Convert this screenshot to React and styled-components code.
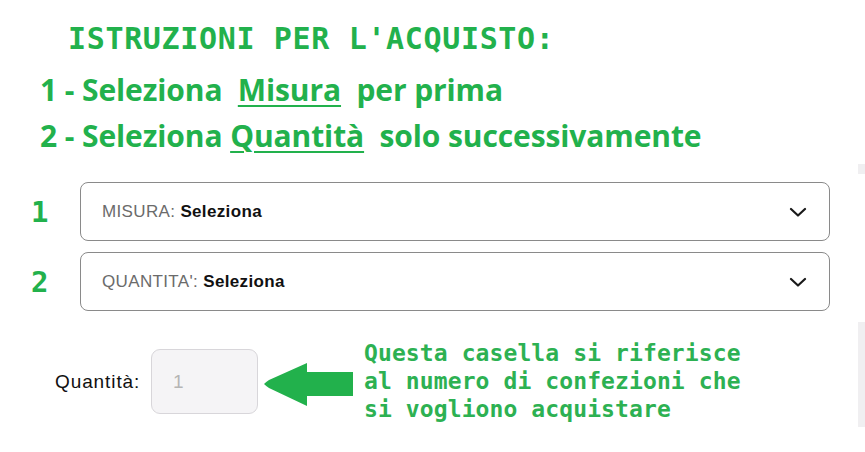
import React from "react";
import styled, { createGlobalStyle } from "styled-components";

const GREEN = "#22b14c";

const Global = createGlobalStyle`
  html, body { margin: 0; padding: 0; background: #fff; }
  body { width: 865px; height: 452px; overflow: hidden; }
`;

const Page = styled.div`
  position: relative;
  width: 865px;
  height: 452px;
  display: flex;
  flex-direction: column;
`;

const Title = styled.h1`
  margin: 21px 0 0 68px;
  font-family: "DejaVu Sans Mono", monospace;
  font-weight: bold;
  font-size: 30px;
  letter-spacing: 0.65px;
  line-height: 36px;
  color: ${GREEN};
  white-space: pre;
`;

const Step = styled.p`
  margin: ${(p) => p.$mt}px 0 0 40px;
  font-family: "Open Sans", sans-serif;
  font-weight: bold;
  font-size: 30px;
  letter-spacing: -0.1px;
  line-height: 40px;
  color: ${GREEN};
  white-space: pre;
`;

const Under = styled.span`
  text-decoration: underline;
  text-decoration-thickness: 2px;
  text-underline-offset: 4px;
`;

const Selects = styled.div`
  margin: 26px 0 0 0;
  display: flex;
  flex-direction: column;
  gap: 11px;
`;

const SelectRow = styled.div`
  display: flex;
  align-items: center;
`;

const RowNum = styled.span`
  width: 80px;
  padding-left: 31px;
  box-sizing: border-box;
  font-family: "DejaVu Sans Mono", monospace;
  font-weight: bold;
  font-size: 29px;
  color: ${GREEN};
`;

const SelectBox = styled.div`
  width: 750px;
  height: 59px;
  box-sizing: border-box;
  border: 1px solid #8a8a8a;
  border-radius: 8px;
  display: flex;
  align-items: center;
  justify-content: space-between;
  padding: 0 22px 0 21px;
  font-family: "Liberation Sans", Arial, sans-serif;
  font-size: 17px;
  letter-spacing: 0.35px;
`;

const SelLabel = styled.span`
  color: #6b6b6b;
`;

const SelValue = styled.span`
  color: #111;
  font-weight: bold;
`;

const QtyRow = styled.div`
  margin: 29px 0 0 55px;
  display: flex;
  align-items: center;
`;

const QtyLabel = styled.span`
  font-family: "Liberation Sans", Arial, sans-serif;
  font-size: 19px;
  letter-spacing: 0.9px;
  color: #111;
  width: 96px;
`;

const QtyInput = styled.div`
  width: 107px;
  height: 65px;
  box-sizing: border-box;
  border: 1px solid #d8d6da;
  border-radius: 9px;
  background: #f5f4f6;
  display: flex;
  align-items: center;
  padding-left: 21px;
  font-family: "Liberation Sans", Arial, sans-serif;
  font-size: 19px;
  color: #b5b5b5;
`;

const Arrow = styled.svg`
  margin: 6px 0 0 5px;
  flex: none;
`;

const Note = styled.p`
  margin: -1px 0 0 11px;
  font-family: "DejaVu Sans Mono", monospace;
  font-weight: bold;
  font-size: 23px;
  line-height: 28px;
  color: #2db152;
  white-space: pre;
  letter-spacing: 0.1px;
`;

const EdgeBar = styled.div`
  position: absolute;
  right: 0;
  width: 7px;
  background: #f0eff1;
  top: ${(p) => p.$top}px;
  height: ${(p) => p.$h}px;
`;

const SelectField = ({ num, label }) => (
  <SelectRow>
    <RowNum>{num}</RowNum>
    <SelectBox>
      <span>
        <SelLabel>{label}: </SelLabel>
        <SelValue>Seleziona</SelValue>
      </span>
      <svg width="18" height="10" viewBox="0 0 18 10">
        <path d="M2 2 L9 8.5 L16 2" fill="none" stroke="#1a1a1a" strokeWidth="2.2" strokeLinecap="round" strokeLinejoin="round" />
      </svg>
    </SelectBox>
  </SelectRow>
);

export default function App() {
  return (
    <Page>
      <Global />
      <Title>ISTRUZIONI PER L'ACQUISTO:</Title>
      <Step $mt={13}>
        1 - Seleziona  <Under>Misura</Under>  per prima
      </Step>
      <Step $mt={6}>
        2 - Seleziona <Under>Quantità</Under>  solo successivamente
      </Step>
      <Selects>
        <SelectField num="1" label="MISURA" />
        <SelectField num="2" label="QUANTITA'" />
      </Selects>
      <QtyRow>
        <QtyLabel>Quantità:</QtyLabel>
        <QtyInput>1</QtyInput>
        <Arrow width="90" height="44" viewBox="0 0 90 44">
          <path d="M1 21 Q3 19 6 17 L44 0 L44 9 L90 9 L90 33 L44 33 L44 43 L6 25 Q3 23 1 21 Z" fill="#22b14c" />
        </Arrow>
        <Note>{"Questa casella si riferisce\nal numero di confezioni che\nsi vogliono acquistare"}</Note>
      </QtyRow>
      <EdgeBar $top={164} $h={10} />
      <EdgeBar $top={322} $h={105} />
    </Page>
  );
}
